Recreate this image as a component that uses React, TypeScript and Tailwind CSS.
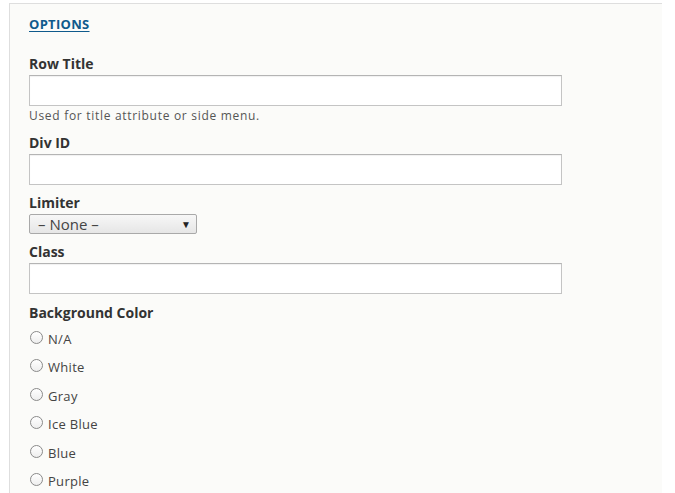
import { useState } from 'react';

const colorOptions = ['N/A', 'White', 'Gray', 'Ice Blue', 'Blue', 'Purple'];

function TextField({ label, description }: { label: string; description?: string }) {
    return (
        <div className="flex flex-col">
            <label className="text-[14px] leading-[18px] font-bold text-[#333]">{label}</label>
            <input
                type="text"
                className="mt-[2px] h-[31px] w-[533px] border border-[#c4c4c4] border-t-[#b4b4b4] bg-white shadow-[inset_0_1px_1px_rgba(0,0,0,0.06)] outline-none"
            />
            {description && (
                <p className="mt-[3px] text-[12px] leading-[14px] text-[#555] tracking-[0.7px]">{description}</p>
            )}
        </div>
    );
}

export default function App() {
    const [bgColor, setBgColor] = useState<string | null>(null);

    return (
        <div className="min-h-screen bg-white pt-[3px] pl-[9px] overflow-hidden" style={{ fontFamily: '"Open Sans", "Liberation Sans", sans-serif' }}>
            {/* Options panel */}
            <div className="w-[653px] min-h-[520px] border-l border-t border-[#dedede] bg-[#fbfbf9] pl-[19px] pt-[12px]">
                <a href="#" className="block w-max text-[13px] leading-[16px] font-bold text-[#0f5a8c] underline underline-offset-[2px] tracking-[0.3px]">
                    OPTIONS
                </a>

                <div className="mt-[23px]">
                    <TextField label="Row Title" description="Used for title attribute or side menu." />
                </div>

                <div className="mt-[11px]">
                    <TextField label="Div ID" />
                </div>

                {/* Limiter select */}
                <div className="mt-[9px] flex flex-col">
                    <label className="text-[14px] leading-[18px] font-bold text-[#333]">Limiter</label>
                    <div className="mt-[2px] flex h-[20px] w-[168px] items-center justify-between rounded-[2px] border border-[#a9a9a9] bg-gradient-to-b from-[#f7f7f7] to-[#e6e6e6] pl-[8px] pr-[5px]">
                        <span className="text-[15px] leading-[18px] text-[#444]">– None –</span>
                        <span className="text-[10px] leading-none text-[#222]">▼</span>
                    </div>
                </div>

                <div className="mt-[9px]">
                    <TextField label="Class" />
                </div>

                {/* Background colour radios */}
                <div className="mt-[10px] flex flex-col">
                    <span className="text-[14px] leading-[18px] font-bold text-[#333]">Background Color</span>
                    <div className="mt-[6px] flex flex-col gap-[10.5px]">
                        {colorOptions.map(opt => (
                            <label key={opt} className="flex h-[18px] items-center cursor-pointer" onClick={() => setBgColor(opt)}>
                                <span className="ml-[1px] flex h-[13px] w-[13px] items-center justify-center rounded-full border border-[#8a8a8a] bg-gradient-to-b from-white to-[#eeeeee]">
                                    {bgColor === opt && <span className="h-[5px] w-[5px] rounded-full bg-[#333]" />}
                                </span>
                                <span className="ml-[5px] text-[13px] leading-[18px] text-[#444] pt-[3px] tracking-[0.3px]">{opt}</span>
                            </label>
                        ))}
                    </div>
                </div>
            </div>
        </div>
    );
}
